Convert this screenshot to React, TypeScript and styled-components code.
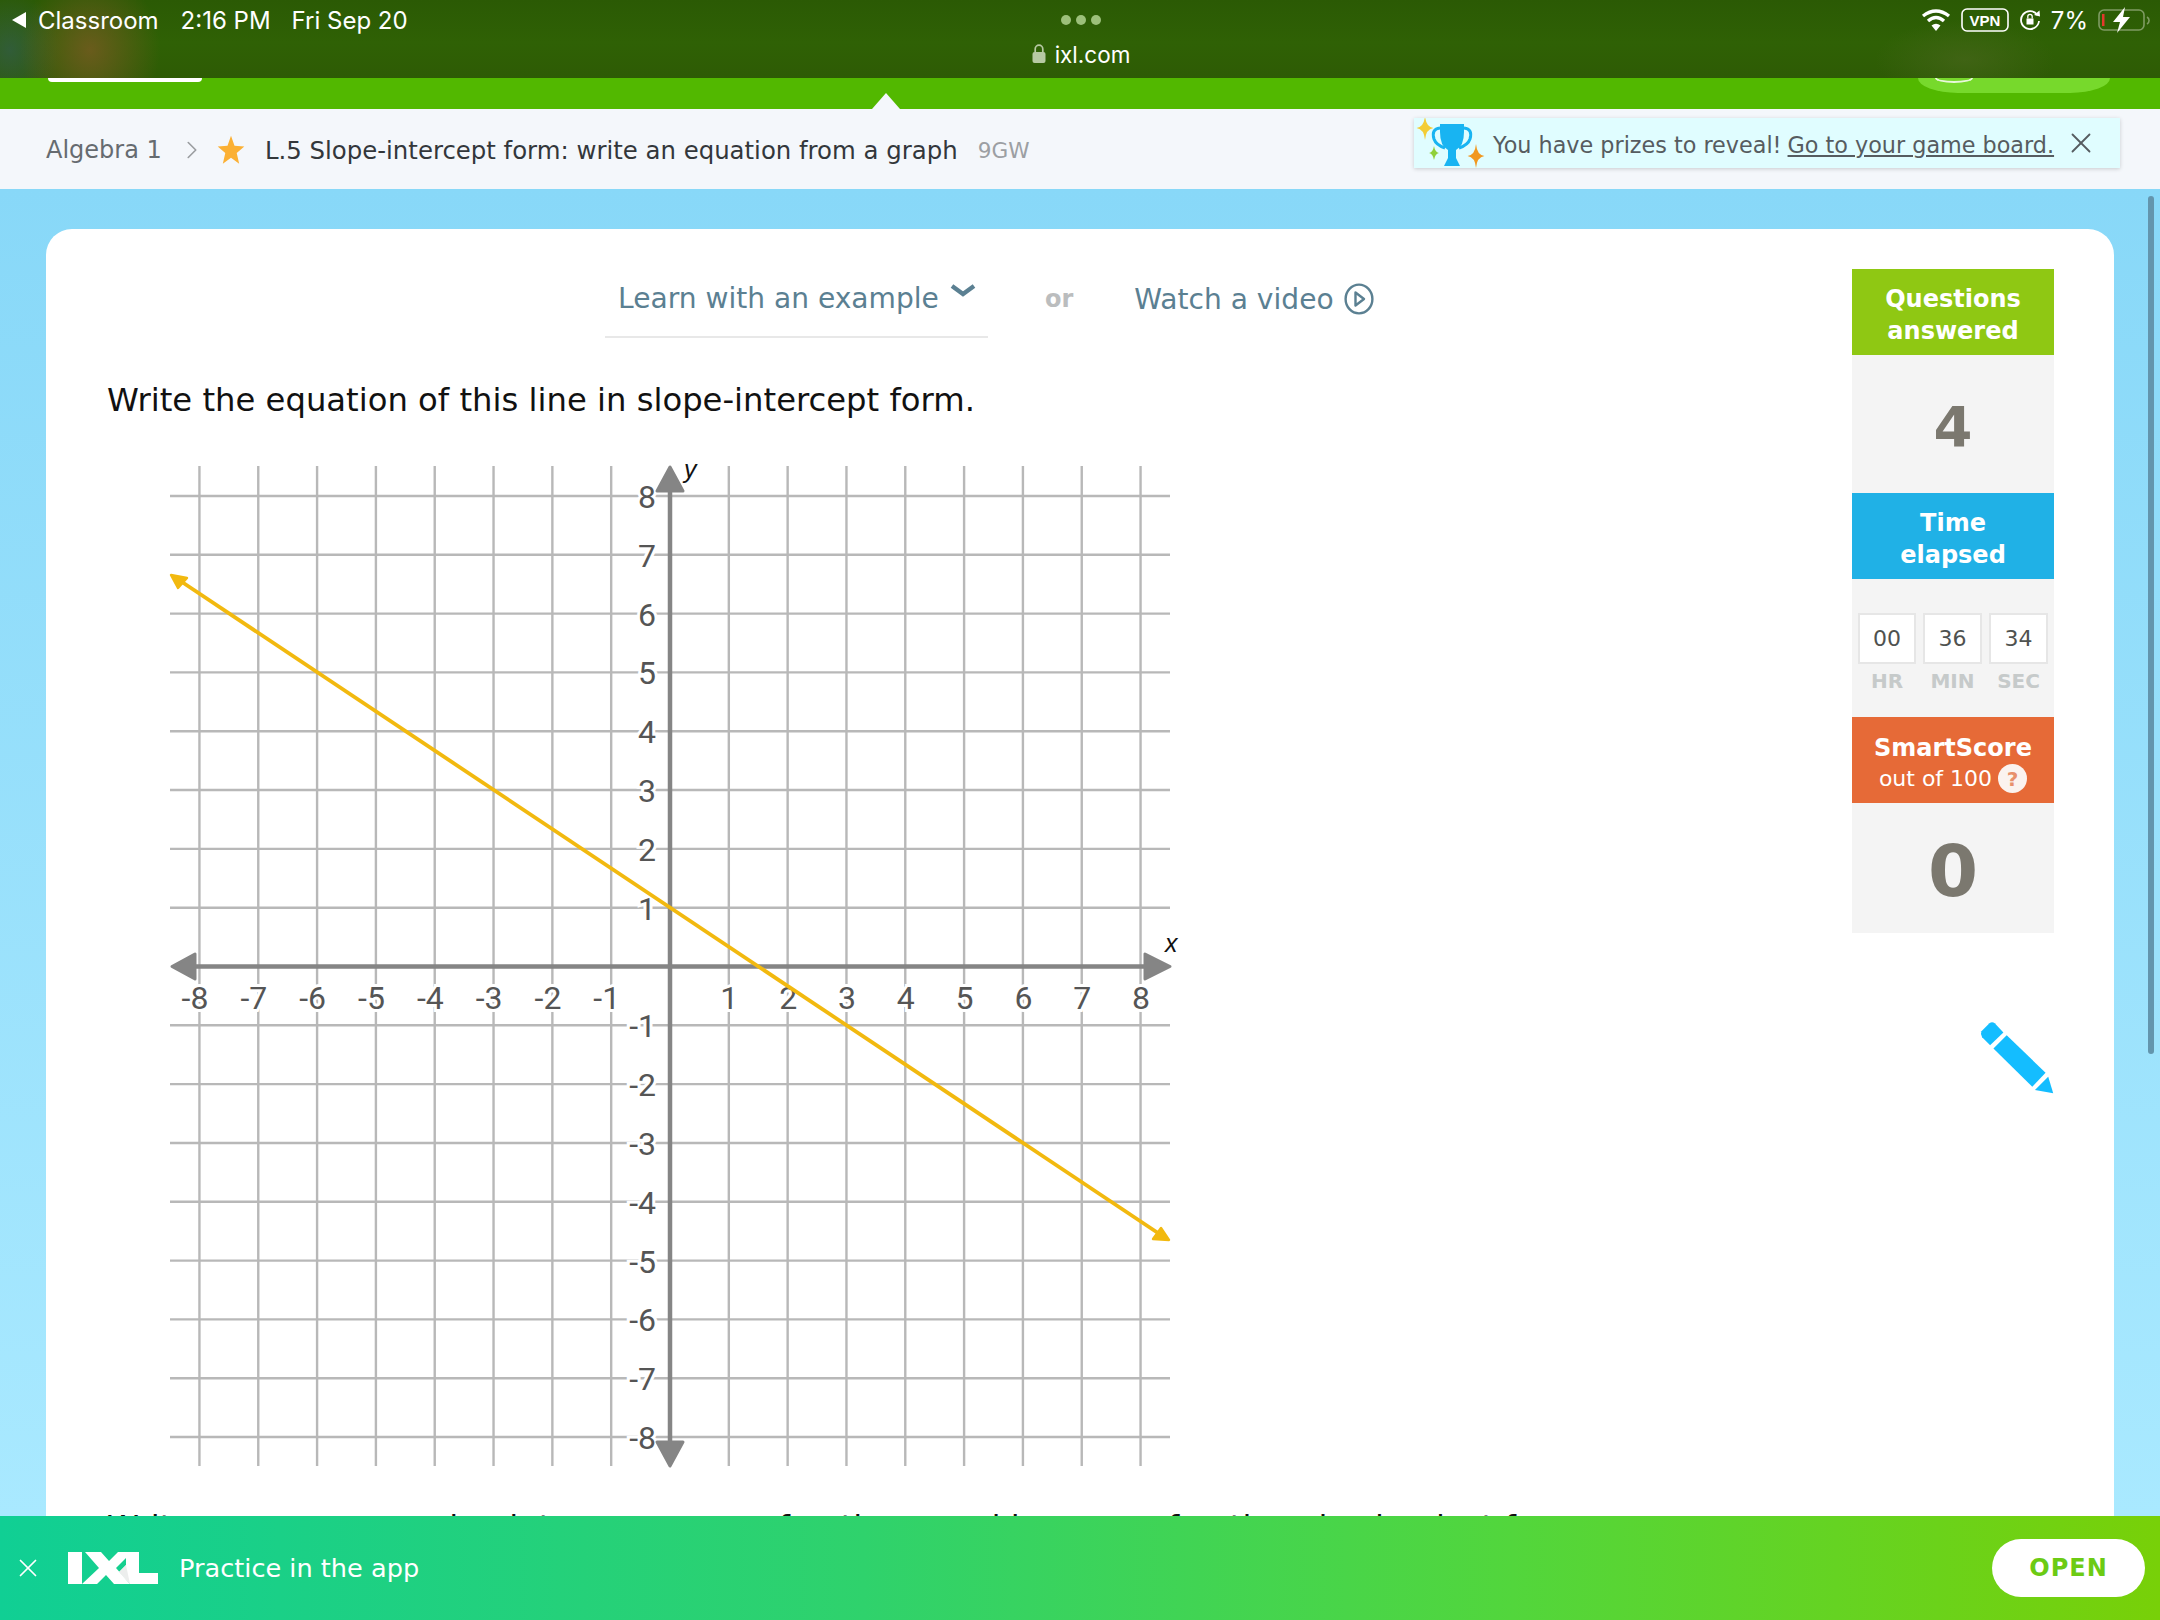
import React from "react";
import styled, { createGlobalStyle } from "styled-components";
import { ChevronRight, X } from "lucide-react";

const GlobalStyle = createGlobalStyle`
  html, body {
    margin: 0;
    padding: 0;
    background: #fff;
  }
  * {
    box-sizing: border-box;
  }
`;

const Page = styled.div`
  width: 2160px;
  height: 1620px;
  position: relative;
  overflow: hidden;
  display: flex;
  flex-direction: column;
  font-family: "DejaVu Sans", Verdana, sans-serif;
`;

const StatusBar = styled.header`
  height: 78px;
  flex: none;
  display: grid;
  grid-template-columns: 1fr auto 1fr;
  padding: 0 10px 0 12px;
  color: #fff;
  font-family: "Inter", "Liberation Sans", sans-serif;
  font-size: 24px;
  background:
    radial-gradient(ellipse 70px 80px at 90px 50px, rgba(125, 90, 35, 0.75), transparent),
    radial-gradient(ellipse 50px 60px at 10px 50px, rgba(50, 90, 90, 0.6), transparent),
    radial-gradient(ellipse 90px 40px at 1965px 60px, rgba(80, 105, 35, 0.5), transparent),
    linear-gradient(180deg, #2b5a04, #2f6105 55%, #2e5b05);
`;

const StatusLeft = styled.div`
  display: flex;
  align-items: center;
  height: 40px;
`;

const BackArrow = styled.span`
  width: 0;
  height: 0;
  border-style: solid;
  border-width: 8px 14px 8px 0;
  border-color: transparent #fff transparent transparent;
  margin-right: 12px;
`;

const StatusText = styled.span<{ $gap?: number }>`
  margin-right: ${(p) => p.$gap ?? 0}px;
  white-space: nowrap;
`;

const StatusCenter = styled.div`
  display: flex;
  flex-direction: column;
  align-items: center;
`;

const Dots = styled.div`
  height: 40px;
  display: flex;
  align-items: center;
  gap: 5px;
`;

const Dot = styled.span`
  width: 10px;
  height: 10px;
  border-radius: 50%;
  background: #9cc07a;
`;

const UrlRow = styled.div`
  display: flex;
  align-items: center;
  gap: 9px;
  height: 28px;
  font-size: 22.5px;
`;

const StatusRight = styled.div`
  display: flex;
  justify-content: flex-end;
  align-items: center;
  height: 40px;
  gap: 10px;
`;

const GreenBand = styled.div`
  height: 31px;
  flex: none;
  position: relative;
  background: #52b800;
`;

const PeekButton = styled.span`
  position: absolute;
  left: 48px;
  top: 0;
  width: 154px;
  height: 4px;
  background: #fff;
  border-radius: 0 0 6px 6px;
`;

const PeekAccount = styled.span`
  position: absolute;
  left: 1918px;
  top: 0;
  width: 192px;
  height: 15px;
  background: #77d92c;
  border-radius: 0 0 40px 40px / 0 0 15px 15px;
`;

const PeekRing = styled.span`
  position: absolute;
  left: 1935px;
  top: 0;
  width: 38px;
  height: 5px;
  border: 2px solid #e8f8da;
  border-top: none;
  border-radius: 0 0 19px 19px / 0 0 5px 5px;
`;

const Notch = styled.span`
  position: absolute;
  left: 872px;
  bottom: 0;
  width: 0;
  height: 0;
  border-style: solid;
  border-width: 0 14px 16px 14px;
  border-color: transparent transparent #f4f7fb transparent;
`;

const Crumbs = styled.nav`
  height: 80px;
  flex: none;
  display: flex;
  align-items: center;
  padding: 2px 40px 0 46px;
  background: #f4f7fb;
  font-size: 24.4px;
`;

const CrumbParent = styled.span`
  color: #666b70;
  font-size: 24px;
  width: 131px;
  white-space: nowrap;
`;

const CrumbChevron = styled.span`
  display: flex;
  width: 40px;
  color: #9a9da0;
`;

const SkillTitle = styled.span`
  color: #33373b;
  margin-left: 20px;
  white-space: nowrap;
`;

const SkillCode = styled.span`
  color: #9c9fa3;
  font-size: 21.6px;
  margin-left: 20px;
  white-space: nowrap;
`;

const PrizeBanner = styled.div`
  margin-left: auto;
  width: 706px;
  height: 50px;
  margin-top: -14px;
  display: flex;
  align-items: center;
  background: #e0fdff;
  box-shadow: 0 1px 4px rgba(0, 0, 0, 0.18);
  color: #565c60;
  font-size: 22.3px;
  white-space: nowrap;
`;

const PrizeLead = styled.span`
  margin: 3px 0 0 7px;
`;

const PrizeLink = styled.a`
  color: #565c60;
  text-decoration: underline;
  margin: 3px 0 0 6px;
`;

const PrizeClose = styled.span`
  display: flex;
  color: #565c60;
  margin-left: 10px;
`;

const Stage = styled.main`
  flex: 1;
  min-height: 0;
  overflow: hidden;
  padding: 40px 46px 0;
  background: linear-gradient(180deg, #88d8f8, #a9e9ff);
`;

const Card = styled.section`
  background: #fff;
  border-radius: 26px 26px 0 0;
  height: 1400px;
  display: flex;
  padding: 40px 60px 0 61px;
`;

const Main = styled.div`
  flex: 1;
  min-width: 0;
`;

const ActionRow = styled.div`
  height: 69px;
  display: flex;
  padding-left: 498px;
  font-size: 28.1px;
  color: #5b8092;
`;

const LearnTab = styled.div`
  width: 383px;
  height: 69px;
  padding: 0 0 9px 13px;
  display: flex;
  align-items: center;
  gap: 11px;
  border-bottom: 2px solid #e8e8e8;
  white-space: nowrap;
`;

const OrLabel = styled.span`
  margin: 0 61px 0 57px;
  height: 60px;
  display: flex;
  align-items: center;
  color: #bbbdbe;
  font-size: 24px;
  font-weight: 700;
`;

const VideoLink = styled.div`
  height: 60px;
  display: flex;
  align-items: center;
  gap: 10px;
  white-space: nowrap;
`;

const Prompt = styled.p`
  margin: 40px 0 0;
  height: 44px;
  line-height: 44px;
  font-size: 32.25px;
  color: #111;
  white-space: nowrap;
`;

const GraphSvg = styled.svg`
  display: block;
  margin: 28px 0 0 58px;
`;

const TickText = styled.text`
  font-family: "Roboto", "Liberation Sans", sans-serif;
  font-size: 32px;
  fill: #555;
  stroke: #fff;
  stroke-width: 6px;
  paint-order: stroke;
`;

const AxisName = styled.text`
  font-family: "Liberation Sans", sans-serif;
  font-style: italic;
  font-size: 25px;
  fill: #111;
`;

const Hint = styled.p`
  margin: 36px 0 0;
  font-size: 32.25px;
  color: #111;
  white-space: nowrap;
`;

const Sidebar = styled.aside`
  width: 202px;
  flex: none;
  display: flex;
  flex-direction: column;
`;

const PanelHead = styled.div<{ $color: string }>`
  height: 86px;
  flex: none;
  display: flex;
  flex-direction: column;
  align-items: center;
  justify-content: center;
  padding-top: 5px;
  background: ${(p) => p.$color};
  color: #fff;
  font-size: 24px;
  line-height: 32px;
  font-weight: 700;
  text-align: center;
`;

const PanelSub = styled.span`
  display: flex;
  align-items: center;
  gap: 6px;
  font-size: 22px;
  line-height: 30px;
  font-weight: 400;
`;

const HelpBadge = styled.span`
  width: 29px;
  height: 29px;
  border-radius: 50%;
  background: #fbf3ef;
  color: #e8906c;
  display: flex;
  align-items: center;
  justify-content: center;
  font-size: 20px;
  font-weight: 700;
`;

const PanelBody = styled.div<{ $height: number; $size: number }>`
  height: ${(p) => p.$height}px;
  flex: none;
  display: flex;
  align-items: center;
  justify-content: center;
  padding-top: 5px;
  background: #f4f4f4;
  color: #7b786f;
  font-size: ${(p) => p.$size}px;
  font-weight: 700;
`;

const TimerBody = styled.div`
  height: 138px;
  flex: none;
  background: #f4f4f4;
  padding: 34px 6px 0;
`;

const TimerGrid = styled.div`
  display: grid;
  grid-template-columns: 58px 59px 59px;
  gap: 0 7px;
  justify-items: center;
`;

const TimerBox = styled.div`
  width: 100%;
  height: 51px;
  background: #fff;
  border: 2px solid #e6e6e6;
  display: flex;
  align-items: center;
  justify-content: center;
  color: #4f5250;
  font-size: 22px;
`;

const TimerUnit = styled.div`
  margin-top: 5px;
  color: #c6caca;
  font-size: 20px;
  font-weight: 700;
`;

const PencilSlot = styled.div`
  margin-top: 87px;
  display: flex;
  justify-content: flex-end;
`;

const Scrollbar = styled.div`
  position: absolute;
  left: 2148px;
  top: 196px;
  width: 6px;
  height: 858px;
  border-radius: 3px;
  background: #6395ad;
`;

const AppBanner = styled.footer`
  height: 104px;
  flex: none;
  display: flex;
  align-items: center;
  padding: 0 15px 0 13px;
  background: linear-gradient(90deg, #10cf94, #2fd26c 40%, #52d63c 70%, #78d008);
  color: #fff;
`;

const BannerClose = styled.span`
  display: flex;
  margin-right: 25px;
`;

const BannerText = styled.span`
  margin-left: 21px;
  font-size: 25.6px;
`;

const OpenButton = styled.button`
  margin-left: auto;
  width: 153px;
  height: 58px;
  border: none;
  border-radius: 29px;
  background: #fff;
  color: #6ccb14;
  font-family: inherit;
  font-size: 24px;
  font-weight: 700;
  letter-spacing: 1px;
`;

const UNIT = 58.82;
const OX = 670;
const OY = 966.5;
const ticks = [-8, -7, -6, -5, -4, -3, -2, -1, 1, 2, 3, 4, 5, 6, 7, 8];

const Graph = () => (
  <GraphSvg width={1015} height={1022} viewBox="165 450 1015 1022">
    {ticks.map((t) => (
      <line key={`v${t}`} x1={OX + t * UNIT} x2={OX + t * UNIT} y1={466} y2={1466} stroke="#b8b8b8" strokeWidth={2.4} />
    ))}
    {ticks.map((t) => (
      <line key={`h${t}`} x1={170} x2={1170} y1={OY - t * UNIT} y2={OY - t * UNIT} stroke="#b8b8b8" strokeWidth={2.4} />
    ))}
    {ticks.map((t) => (
      <TickText key={`x${t}`} x={t < 0 ? OX + t * UNIT + 9 : OX + t * UNIT + 0.5} y={1009} textAnchor={t < 0 ? "end" : "middle"}>
        {t}
      </TickText>
    ))}
    {ticks.map((t) => (
      <TickText key={`y${t}`} x={656} y={OY - t * UNIT + 12} textAnchor="end">
        {t}
      </TickText>
    ))}
    <line x1={670} x2={670} y1={480} y2={1450} stroke="#858585" strokeWidth={4.5} />
    <line x1={185} x2={1155} y1={OY} y2={OY} stroke="#858585" strokeWidth={4.5} />
    <g fill="#858585" stroke="#858585" strokeWidth={3} strokeLinejoin="round">
      <polygon points="670,467 657,491 683,491" />
      <polygon points="670,1466 657,1442 683,1442" />
      <polygon points="172,966.5 195,954 195,979" />
      <polygon points="1170,966.5 1145,954 1145,979" />
    </g>
    <line x1={176} x2={1164} y1={578} y2={1237} stroke="#f2b90f" strokeWidth={3.8} />
    <g fill="#f2b90f" stroke="#f2b90f" strokeWidth={2.4} strokeLinejoin="round">
      <polygon points="171,575 187,578 178,588" />
      <polygon points="1169,1240 1161,1228 1153,1239" />
    </g>
    <AxisName x={684} y={478}>y</AxisName>
    <AxisName x={1165} y={952}>x</AxisName>
  </GraphSvg>
);

const WifiIcon = () => (
  <svg width="30" height="24" viewBox="0 0 30 24" fill="none" stroke="#fff" strokeWidth="3.4" strokeLinecap="butt">
    <path d="M2 8 Q15 -2 28 8" />
    <path d="M7 13 Q15 6 23 13" />
    <path d="M15 23 L10.5 17.5 Q15 14 19.5 17.5 Z" fill="#fff" stroke="none" />
  </svg>
);

const VpnBadge = () => (
  <svg width="48" height="24" viewBox="0 0 48 24">
    <rect x="1" y="1" width="46" height="22" rx="5" fill="none" stroke="#fff" strokeWidth="1.6" />
    <text x="24" y="17.5" fontFamily="Liberation Sans, sans-serif" fontSize="15" fontWeight="700" fill="#fff" textAnchor="middle">VPN</text>
  </svg>
);

const RotationLock = () => (
  <svg width="22" height="24" viewBox="0 0 22 24" fill="none" stroke="#fff" strokeWidth="1.8">
    <path d="M18.5 7 A9 9 0 1 0 20 13" />
    <path d="M15 7 L21 8.5 L20.5 2.5" fill="#fff" stroke="none" />
    <rect x="7.5" y="10.5" width="7" height="6" fill="#fff" stroke="none" />
    <path d="M8.8 10.5 V8.5 a2.2 2.2 0 0 1 4.4 0 V10.5" strokeWidth="1.3" />
  </svg>
);

const Battery = () => (
  <svg width="52" height="26" viewBox="0 0 52 26">
    <rect x="1" y="3" width="45" height="20" rx="5" fill="none" stroke="#7f9b63" strokeWidth="1.6" />
    <rect x="4" y="7" width="2.5" height="12" fill="#e2392c" />
    <path d="M49 10 a4 4 0 0 1 0 7" fill="none" stroke="#7f9b63" strokeWidth="1.6" />
    <path d="M27 0 L15 15 H22 L19 26 L32 10 H25 Z" fill="#fff" />
  </svg>
);

const UrlLock = () => (
  <svg width="14" height="20" viewBox="0 0 14 20">
    <rect x="0.5" y="8" width="13" height="11" rx="2" fill="#b7c9a3" />
    <path d="M3.2 8 V5 a3.8 3.8 0 0 1 7.6 0 V8" fill="none" stroke="#b7c9a3" strokeWidth="1.7" />
  </svg>
);

const Star = () => (
  <svg width="28" height="30" viewBox="0 0 24 24" preserveAspectRatio="none">
    <path d="M12 0.5 L15 8.6 L23.4 9.2 L16.9 14.4 L19 23 L12 18.2 L5 23 L7.1 14.4 L0.6 9.2 L9 8.6 Z" fill="#fbb034" />
  </svg>
);

const Sparkle = ({ x, y, r, color }: { x: number; y: number; r: number; color: string }) => (
  <path
    d={`M${x} ${y - r} Q${x + 1} ${y - 1} ${x + r * 0.7} ${y} Q${x + 1} ${y + 1} ${x} ${y + r} Q${x - 1} ${y + 1} ${x - r * 0.7} ${y} Q${x - 1} ${y - 1} ${x} ${y - r} Z`}
    fill={color}
  />
);

const Trophy = () => (
  <svg width="72" height="50" viewBox="0 0 72 50">
    <Sparkle x={11} y={10} r={12} color="#f3cd35" />
    <Sparkle x={20} y={35} r={7} color="#8fd03a" />
    <Sparkle x={62} y={38} r={12} color="#f1981f" />
    <path d="M26 6 H50 V14 Q50 28 42 32 V40 L46 48 H30 L34 40 V32 Q26 28 26 14 Z" fill="#18b4f2" />
    <path d="M26 10 Q17 11 20 21 Q22 27 31 30 M50 10 Q59 11 56 21 Q54 27 45 30" fill="none" stroke="#18b4f2" strokeWidth="3" />
  </svg>
);

const PlayCircle = () => (
  <svg width="30" height="32" viewBox="0 0 30 32" fill="none" stroke="#5b8092" strokeWidth="2.4">
    <ellipse cx="15" cy="16" rx="13.4" ry="14.4" />
    <path d="M11.5 9.5 L20 16 L11.5 22.5 Z" strokeLinejoin="round" />
  </svg>
);

const ExampleChevron = styled.svg`
  margin-top: -14px;
`;

const Pencil = styled.svg`
  margin-top: -18px;
`;

const IxlLogo = () => (
  <svg width="90" height="32" viewBox="0 0 90 32">
    <rect x="0" y="0" width="14" height="32" fill="#fff" />
    <polygon points="17,0 33,0 41,9 50,0 64,0 48,16 62,32 46,32 38,23 29,32 14,32 31,16" fill="#fff" />
    <polygon points="58,0 71,0 71,21 90,21 90,32 62,32 51,20 58,13" fill="#fff" />
    <polygon points="58,13 62,32 51,20" fill="#eceeed" />
  </svg>
);

const App = () => {
  return (
    <Page>
      <GlobalStyle />
      <StatusBar>
        <StatusLeft>
          <BackArrow />
          <StatusText $gap={22}>Classroom</StatusText>
          <StatusText $gap={21}>2:16 PM</StatusText>
          <StatusText>Fri Sep 20</StatusText>
        </StatusLeft>
        <StatusCenter>
          <Dots>
            <Dot />
            <Dot />
            <Dot />
          </Dots>
          <UrlRow>
            <UrlLock />
            ixl.com
          </UrlRow>
        </StatusCenter>
        <StatusRight>
          <WifiIcon />
          <VpnBadge />
          <RotationLock />
          <StatusText>7%</StatusText>
          <Battery />
        </StatusRight>
      </StatusBar>
      <GreenBand>
        <PeekButton />
        <PeekAccount />
        <PeekRing />
        <Notch />
      </GreenBand>
      <Crumbs>
        <CrumbParent>Algebra 1</CrumbParent>
        <CrumbChevron>
          <ChevronRight size={30} strokeWidth={1.3} />
        </CrumbChevron>
        <Star />
        <SkillTitle>L.5 Slope-intercept form: write an equation from a graph</SkillTitle>
        <SkillCode>9GW</SkillCode>
        <PrizeBanner>
          <Trophy />
          <PrizeLead>You have prizes to reveal!</PrizeLead>
          <PrizeLink>Go to your game board.</PrizeLink>
          <PrizeClose>
            <X size={34} strokeWidth={1.3} />
          </PrizeClose>
        </PrizeBanner>
      </Crumbs>
      <Stage>
        <Card>
          <Main>
            <ActionRow>
              <LearnTab>
                Learn with an example
                <ExampleChevron width="26" height="16" viewBox="0 0 26 16">
                  <path d="M2 3 L13 11 L24 3" fill="none" stroke="#5b8092" strokeWidth="4.4" />
                </ExampleChevron>
              </LearnTab>
              <OrLabel>or</OrLabel>
              <VideoLink>
                Watch a video
                <PlayCircle />
              </VideoLink>
            </ActionRow>
            <Prompt>Write the equation of this line in slope-intercept form.</Prompt>
            <Graph />
            <Hint>Write your answer using integers, proper fractions, and improper fractions in simplest form.</Hint>
          </Main>
          <Sidebar>
            <PanelHead $color="#8fc813">
              <span>Questions</span>
              <span>answered</span>
            </PanelHead>
            <PanelBody $height={138} $size={56}>4</PanelBody>
            <PanelHead $color="#20b1e6">
              <span>Time</span>
              <span>elapsed</span>
            </PanelHead>
            <TimerBody>
              <TimerGrid>
                <TimerBox>00</TimerBox>
                <TimerBox>36</TimerBox>
                <TimerBox>34</TimerBox>
                <TimerUnit>HR</TimerUnit>
                <TimerUnit>MIN</TimerUnit>
                <TimerUnit>SEC</TimerUnit>
              </TimerGrid>
            </TimerBody>
            <PanelHead $color="#e66a37">
              <span>SmartScore</span>
              <PanelSub>
                out of 100
                <HelpBadge>?</HelpBadge>
              </PanelSub>
            </PanelHead>
            <PanelBody $height={130} $size={72}>0</PanelBody>
            <PencilSlot>
              <Pencil width="74" height="93" viewBox="0 0 222 280">
                <g fill="#14bdff">
                  <path d="M4 88 L28 64 Q36 58 44 64 L70 92 L30 130 L6 106 Q0 96 4 88 Z" />
                  <polygon points="80,100 197,213 157,255 40,140" />
                  <polygon points="205,225 220,275 165,265" />
                </g>
              </Pencil>
            </PencilSlot>
          </Sidebar>
        </Card>
      </Stage>
      <Scrollbar />
      <AppBanner>
        <BannerClose>
          <X size={30} strokeWidth={1.4} />
        </BannerClose>
        <IxlLogo />
        <BannerText>Practice in the app</BannerText>
        <OpenButton>OPEN</OpenButton>
      </AppBanner>
    </Page>
  );
};

export default App;
